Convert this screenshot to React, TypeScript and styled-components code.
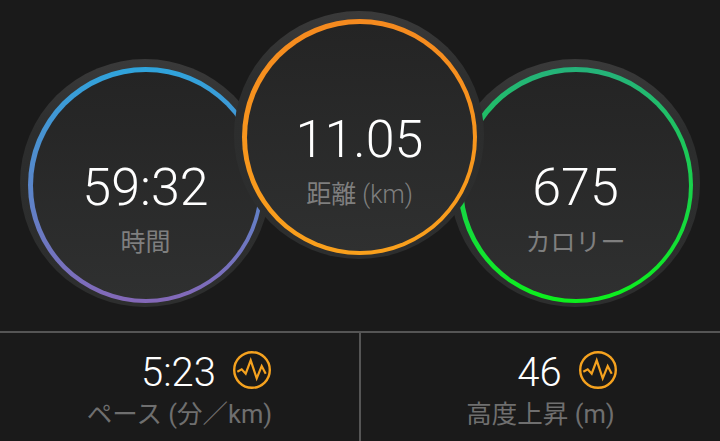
import React from "react";
import styled, { createGlobalStyle } from "styled-components";

const GlobalStyle = createGlobalStyle`
  html, body {
    margin: 0;
    padding: 0;
    background: #1a1a1a;
  }
  body {
    font-family: Roboto, "Noto Sans CJK JP", sans-serif;
  }
`;

interface IGauge {
  value: string;
  label: string;
  unit?: string;
  from: string;
  to: string;
}

const PulseIcon = () => (
  <Icon viewBox="0 0 38 38" aria-hidden="true">
    <circle cx="19" cy="19" r="17.8" fill="none" stroke="#f5a21f" strokeWidth="2.4" />
    <polyline
      points="4.3,20.7 8.7,18.3 12.7,22.7 17.7,9.3 23.7,27.3 28.7,15 32.7,22.7"
      fill="none"
      stroke="#f5a21f"
      strokeWidth="2.2"
      strokeLinejoin="miter"
    />
  </Icon>
);

const Gauge = ({ value, label, unit, from, to, ...rest }: IGauge) => (
  <Bezel {...rest}>
    <Ring $from={from} $to={to}>
      <Face>
        <GaugeValue>{value}</GaugeValue>
        <GaugeLabel>
          {label}
          {unit && <Unit> {unit}</Unit>}
        </GaugeLabel>
      </Face>
    </Ring>
  </Bezel>
);

const App = () => {
  return (
    <Screen>
      <GlobalStyle />
      <Gauges>
        <SideGauge value="59:32" label="時間" from="#2fa4dc" to="#8468b8" />
        <MainGauge value="11.05" label="距離" unit="(km)" from="#f58a1f" to="#f9a01c" />
        <SideGauge value="675" label="カロリー" from="#25b27a" to="#0cf01c" />
      </Gauges>
      <Stats>
        <Stat>
          <StatValue>
            5:23
            <PulseIcon />
          </StatValue>
          <StatLabel>ペース (分／km)</StatLabel>
        </Stat>
        <Stat>
          <StatValue>
            46
            <PulseIcon />
          </StatValue>
          <StatLabel>高度上昇 (m)</StatLabel>
        </Stat>
      </Stats>
    </Screen>
  );
};

export default App;

const Screen = styled.div`
  width: 720px;
  height: 441px;
  overflow: hidden;
  display: flex;
  flex-direction: column;
  background: #1a1a1a;
`;

const Gauges = styled.div`
  height: 331px;
  box-sizing: border-box;
  padding: 11px 0 0 20px;
  display: flex;
  align-items: flex-start;
`;

/* the ring sits low and left in its bezel, which gives the raised edge on top */
const Bezel = styled.div`
  box-sizing: border-box;
  width: 250px;
  height: 248px;
  padding: 8px 7px 4px 8px;
  flex: none;
  border-radius: 50%;
  background: linear-gradient(#3a3a3a 0%, #2c2d2d 30%, #2d2e2e 100%);
`;

const SideGauge = styled(Gauge)`
  margin-top: 48px;
`;

const MainGauge = styled(Gauge)`
  position: relative;
  z-index: 1;
  margin: 0 -34px 0 -36px;
`;

const Ring = styled.div<{ $from: string; $to: string }>`
  box-sizing: border-box;
  width: 100%;
  height: 100%;
  padding: 4.5px;
  border-radius: 50%;
  background: linear-gradient(${(props) => props.$from}, ${(props) => props.$to});
`;

const Face = styled.div`
  box-sizing: border-box;
  width: 100%;
  height: 100%;
  padding-top: 85px;
  border-radius: 50%;
  background: linear-gradient(#242424, #2f3030);
  display: flex;
  flex-direction: column;
  align-items: center;
`;

const GaugeValue = styled.div`
  font-size: 52px;
  font-weight: 300;
  line-height: 61px;
  color: #fff;
`;

const GaugeLabel = styled.div`
  margin-top: 9px;
  font-size: 25px;
  font-weight: 400;
  line-height: 32px;
  color: #7f7f7f;
`;

const Unit = styled.span`
  font-weight: 300;
`;

const Stats = styled.div`
  flex: 1;
  display: grid;
  grid-template-columns: 361px 359px;
  border-top: 2px solid #555;
`;

const Stat = styled.div`
  display: flex;
  flex-direction: column;
  align-items: center;
  padding-top: 16px;

  &:first-child {
    box-sizing: border-box;
    border-right: 2px solid #555;
  }
`;

const StatValue = styled.div`
  position: relative;
  margin-right: 2px;
  font-size: 40px;
  font-weight: 300;
  line-height: 47px;
  color: #fff;
`;

const Icon = styled.svg`
  position: absolute;
  left: calc(100% + 17px);
  top: 2px;
  width: 38px;
  height: 38px;
`;

const StatLabel = styled.div`
  margin-top: 2px;
  font-size: 25.5px;
  font-weight: 400;
  line-height: 32px;
  color: #6f6f6f;
`;
